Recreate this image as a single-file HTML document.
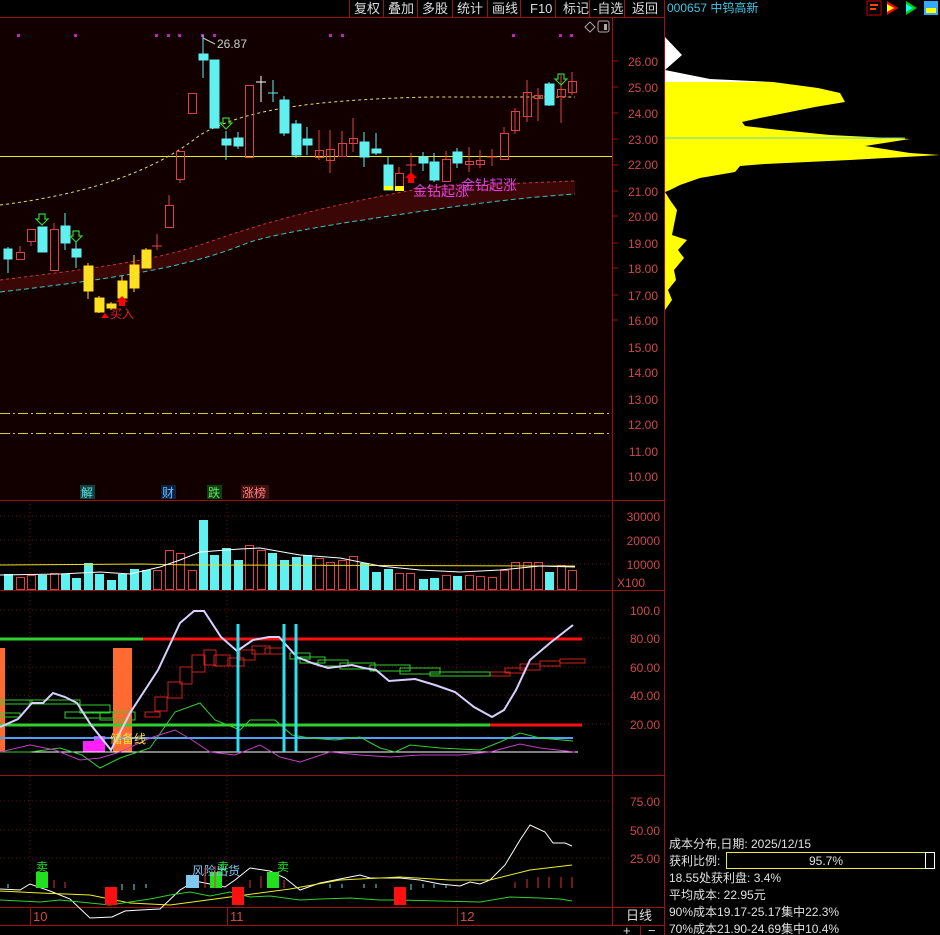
<!DOCTYPE html>
<html><head><meta charset="utf-8"><style>
html,body{margin:0;padding:0;background:#000;width:940px;height:935px;overflow:hidden}
svg{display:block}
text{font-family:"Liberation Sans","Noto Sans CJK SC",sans-serif}
</style></head><body>
<svg width="940" height="935" viewBox="0 0 940 935" xmlns="http://www.w3.org/2000/svg">
<rect width="940" height="935" fill="#000"/>
<!-- main chart bg -->
<rect x="0" y="18" width="612" height="482" fill="#120000"/>
<!-- top bar -->
<g stroke="#a01010" stroke-width="1">
<line x1="0" y1="17.5" x2="665" y2="17.5"/>
<line x1="349.5" y1="0" x2="349.5" y2="17"/><line x1="383.5" y1="0" x2="383.5" y2="17"/><line x1="417.5" y1="0" x2="417.5" y2="17"/><line x1="452.5" y1="0" x2="452.5" y2="17"/><line x1="487.5" y1="0" x2="487.5" y2="17"/><line x1="520.5" y1="0" x2="520.5" y2="17"/><line x1="555.5" y1="0" x2="555.5" y2="17"/><line x1="589.5" y1="0" x2="589.5" y2="17"/><line x1="624.5" y1="0" x2="624.5" y2="17"/>
<line x1="664.5" y1="0" x2="664.5" y2="935"/>
<line x1="612.5" y1="18" x2="612.5" y2="925"/>
<line x1="0" y1="500.5" x2="665" y2="500.5"/>
<line x1="0" y1="590.5" x2="665" y2="590.5"/>
<line x1="0" y1="775.5" x2="665" y2="775.5"/>
<line x1="0" y1="907.5" x2="665" y2="907.5"/>
<line x1="0" y1="925.5" x2="665" y2="925.5"/>
<line x1="30.5" y1="907" x2="30.5" y2="925"/><line x1="227.5" y1="907" x2="227.5" y2="925"/><line x1="457.5" y1="907" x2="457.5" y2="925"/>
<line x1="640.5" y1="925" x2="640.5" y2="935"/>
</g>
<g fill="#ddd" font-size="13">
<text x="354" y="13">复权</text><text x="388" y="13">叠加</text><text x="422" y="13">多股</text><text x="457" y="13">统计</text><text x="492" y="13">画线</text><text x="530" y="13">F10</text><text x="563" y="13">标记</text><text x="593" y="13">-自选</text><text x="632" y="13">返回</text>
</g>
<text x="667" y="12" fill="#3cc8e8" font-size="12">000657 中钨高新</text>
<!-- top right icons -->
<rect x="867" y="1" width="14" height="14" fill="none" stroke="#c00"/><line x1="870" y1="5" x2="878" y2="5" stroke="#f40" stroke-width="2"/><line x1="870" y1="9" x2="876" y2="9" stroke="#f40" stroke-width="2"/>
<polygon points="887,1 898,8 887,15" fill="#f00"/><polygon points="887,4 894,8 887,12" fill="#ff0"/>
<polygon points="906,1 917,8 906,15" fill="#0c0"/><polygon points="906,4 913,8 906,12" fill="#0ff"/>
<rect x="924" y="1" width="14" height="14" fill="#3af"/><rect x="926" y="8" width="10" height="5" fill="#ff0"/>
<!-- diamond & icon -->
<polygon points="590,22 595,27 590,32 585,27" fill="none" stroke="#aaa"/>
<rect x="598" y="21" width="11" height="11" rx="2" fill="none" stroke="#aaa"/><rect x="604" y="24" width="3" height="6" fill="#aaa"/>
<!-- magenta dots -->
<g fill="#c020c0"><rect x="17" y="34" width="3" height="3"/><rect x="74" y="34" width="3" height="3"/><rect x="155" y="34" width="3" height="3"/><rect x="167" y="34" width="3" height="3"/><rect x="178" y="34" width="3" height="3"/><rect x="201" y="34" width="3" height="3"/><rect x="213" y="34" width="3" height="3"/><rect x="329" y="34" width="3" height="3"/><rect x="341" y="34" width="3" height="3"/><rect x="512" y="34" width="3" height="3"/><rect x="559" y="34" width="3" height="3"/><rect x="570" y="34" width="3" height="3"/></g>
<!-- band -->
<path d="M0,280 C80,270 150,262 200,245 C250,228 300,210 430,187 L575,181 L575,194 C520,198 480,202 350,222 C300,230 270,236 250,242 C200,262 150,275 0,292 Z" fill="#3a0606"/>
<path d="M0,280 C80,270 150,262 200,245 C250,228 300,210 430,187 L575,181" fill="none" stroke="#d03030" stroke-dasharray="3,3"/>
<path d="M0,292 C150,275 200,262 250,242 C270,236 300,230 350,222 C480,202 520,198 575,194" fill="none" stroke="#40c0c0" stroke-dasharray="5,3"/>
<path d="M0,205 C80,195 150,175 200,135 C240,112 300,100 430,97 L575,97" fill="none" stroke="#e8e060" stroke-dasharray="3,3"/>
<line x1="0" y1="156.5" x2="612" y2="156.5" stroke="#e8e820"/>
<line x1="0" y1="413.5" x2="612" y2="413.5" stroke="#d8c830" stroke-dasharray="10,3,2,3"/>
<line x1="0" y1="433.5" x2="612" y2="433.5" stroke="#d8c830" stroke-dasharray="10,3,2,3"/>
<!-- candles -->
<g stroke-width="1">
<g stroke="#60f0f0" fill="#60f0f0">
<line x1="8" y1="247" x2="8" y2="273"/><rect x="4" y="249" width="8" height="10"/>
<line x1="42" y1="227" x2="42" y2="252"/><rect x="38" y="227" width="9" height="25"/>
<line x1="65" y1="213" x2="65" y2="250"/><rect x="61" y="226" width="9" height="17"/>
<line x1="76" y1="242" x2="76" y2="268"/><rect x="72" y="249" width="9" height="8"/>
<line x1="203" y1="35" x2="203" y2="78"/><rect x="199" y="54" width="9" height="6"/>
<rect x="210" y="60" width="9" height="68"/>
<line x1="226" y1="131" x2="226" y2="160"/><rect x="222" y="139" width="9" height="6"/>
<line x1="238" y1="132" x2="238" y2="149"/><rect x="234" y="138" width="9" height="8"/>
<line x1="273" y1="80" x2="273" y2="102"/><line x1="268" y1="93" x2="278" y2="93"/>
<line x1="284" y1="96" x2="284" y2="136"/><rect x="280" y="100" width="9" height="33"/>
<line x1="296" y1="120" x2="296" y2="158"/><rect x="292" y="124" width="9" height="31"/>
<line x1="307" y1="127" x2="307" y2="155"/><rect x="303" y="139" width="9" height="6"/>
<line x1="364" y1="132" x2="364" y2="167"/><rect x="360" y="142" width="9" height="15"/>
<line x1="376" y1="133" x2="376" y2="155"/><rect x="372" y="149" width="9" height="4"/>
<line x1="388" y1="156" x2="388" y2="190"/><rect x="384" y="165" width="9" height="25"/>
<line x1="423" y1="152" x2="423" y2="171"/><rect x="419" y="157" width="9" height="6"/>
<line x1="434" y1="153" x2="434" y2="182"/><rect x="430" y="162" width="9" height="18"/>
<line x1="457" y1="148" x2="457" y2="168"/><rect x="453" y="152" width="9" height="11"/>
<line x1="549" y1="82" x2="549" y2="106"/><rect x="545" y="84" width="9" height="21"/>
</g>
<rect x="384" y="186" width="9" height="4" fill="#ff0"/>
<g stroke="#ffe020" fill="#ffe020">
<line x1="88" y1="263" x2="88" y2="299"/><rect x="84" y="266" width="9" height="25"/>
<line x1="99" y1="296" x2="99" y2="313"/><rect x="95" y="298" width="9" height="14"/>
<line x1="111" y1="302" x2="111" y2="310"/><rect x="107" y="304" width="9" height="4"/>
<line x1="122" y1="276" x2="122" y2="300"/><rect x="118" y="281" width="9" height="17"/>
<line x1="134" y1="255" x2="134" y2="292"/><rect x="130" y="265" width="9" height="23"/>
<line x1="146" y1="248" x2="146" y2="268"/><rect x="142" y="250" width="9" height="18"/>
</g>
<g stroke="#e04040" fill="none">
<rect x="16.5" y="252.5" width="8" height="7"/><line x1="20" y1="246" x2="20" y2="252"/>
<rect x="27.5" y="229.5" width="8" height="12"/><line x1="31" y1="241" x2="31" y2="246"/>
<rect x="50.5" y="229.5" width="8" height="41"/><line x1="54" y1="223" x2="54" y2="229"/>
<line x1="157" y1="234" x2="157" y2="250"/><line x1="152" y1="246" x2="162" y2="246"/>
<rect x="165.5" y="205.5" width="8" height="22"/><line x1="169" y1="195" x2="169" y2="205"/>
<rect x="176.5" y="151.5" width="8" height="28"/><line x1="180" y1="180" x2="180" y2="183"/>
<rect x="188.5" y="93.5" width="8" height="20"/>
<rect x="245.5" y="85.5" width="8" height="72"/>
<rect x="315.5" y="150.5" width="8" height="7"/><line x1="319" y1="130" x2="319" y2="160"/>
<rect x="326.5" y="149.5" width="8" height="11"/><line x1="330" y1="130" x2="330" y2="173"/>
<rect x="338.5" y="143.5" width="8" height="13"/><line x1="342" y1="131" x2="342" y2="157"/>
<rect x="349.5" y="138.5" width="8" height="5"/><line x1="353" y1="118" x2="353" y2="152"/>
<rect x="395.5" y="173.5" width="8" height="17"/><line x1="399" y1="167" x2="399" y2="173"/>
<line x1="411" y1="153" x2="411" y2="173"/><line x1="406" y1="165" x2="416" y2="165"/>
<rect x="442.5" y="159.5" width="8" height="22"/><line x1="446" y1="151" x2="446" y2="159"/>
<rect x="465.5" y="161.5" width="8" height="3"/><line x1="469" y1="147" x2="469" y2="172"/>
<rect x="476.5" y="160.5" width="8" height="4"/><line x1="480" y1="150" x2="480" y2="168"/>
<line x1="492" y1="149" x2="492" y2="166"/><line x1="487" y1="157" x2="497" y2="157"/>
<rect x="500.5" y="133.5" width="8" height="26"/><line x1="504" y1="127" x2="504" y2="133"/>
<rect x="511.5" y="111.5" width="8" height="19"/><line x1="515" y1="108" x2="515" y2="134"/>
<rect x="523.5" y="92.5" width="8" height="24"/><line x1="527" y1="80" x2="527" y2="122"/>
<rect x="534.5" y="95.5" width="8" height="3"/><line x1="538" y1="88" x2="538" y2="121"/>
<rect x="557.5" y="89.5" width="8" height="7"/><line x1="561" y1="75" x2="561" y2="123"/>
<rect x="568.5" y="81.5" width="8" height="11"/><line x1="572" y1="72" x2="572" y2="95"/>
</g>
<g stroke="#fff"><line x1="261" y1="76" x2="261" y2="102"/><line x1="256" y1="82" x2="266" y2="82"/></g>
<rect x="395" y="186" width="9" height="5" fill="#ff0"/>
</g>
<!-- arrows -->
<g fill="none" stroke="#30d030" stroke-width="1.2">
<path d="M39,214h6v5h3l-6,6l-6,-6h3z"/><path d="M73,231h6v5h3l-6,6l-6,-6h3z"/><path d="M223,118h6v5h3l-6,6l-6,-6h3z"/><path d="M558,74h6v5h3l-6,6l-6,-6h3z"/>
</g>
<path d="M408,183v-5h-3l6,-6l6,6h-3v5z" fill="#f00"/>
<path d="M119,306v-4h-3l6,-6l6,6h-3v4z" fill="#f00"/>
<polygon points="105,313 101,318 109,318" fill="#f00"/>
<text x="110" y="318" fill="#e02020" font-size="12">买入</text>
<text x="413" y="196" fill="#e040e0" font-size="14">金钻起涨</text>
<text x="461" y="190" fill="#e040e0" font-size="14">金钻起涨</text>
<line x1="203" y1="38" x2="215" y2="44" stroke="#ccc"/>
<text x="217" y="48" fill="#ccc" font-size="12">26.87</text>
<!-- right axis labels -->
<g fill="#d04848" font-size="12" text-anchor="end">
<text x="658" y="66">26.00</text><text x="658" y="92">25.00</text><text x="658" y="118">24.00</text><text x="658" y="144">23.00</text><text x="658" y="169">22.00</text><text x="658" y="196">21.00</text><text x="658" y="221">20.00</text><text x="658" y="248">19.00</text><text x="658" y="273">18.00</text><text x="658" y="300">17.00</text><text x="658" y="325">16.00</text><text x="658" y="352">15.00</text><text x="658" y="377">14.00</text><text x="658" y="404">13.00</text><text x="658" y="429">12.00</text><text x="658" y="456">11.00</text><text x="658" y="481">10.00</text>
<text x="660" y="521">30000</text><text x="660" y="545">20000</text><text x="660" y="569">10000</text>
<text x="660" y="615">100.0</text><text x="660" y="643">80.00</text><text x="660" y="672">60.00</text><text x="660" y="700">40.00</text><text x="660" y="729">20.00</text>
<text x="660" y="806">75.00</text><text x="660" y="835">50.00</text><text x="660" y="863">25.00</text>
</g>
<text x="617" y="587" fill="#d04848" font-size="12">X100</text>
<g stroke="#a01010"><line x1="613" y1="61" x2="618" y2="61"/><line x1="613" y1="87" x2="618" y2="87"/><line x1="613" y1="113" x2="618" y2="113"/><line x1="613" y1="139" x2="618" y2="139"/><line x1="613" y1="165" x2="618" y2="165"/><line x1="613" y1="191" x2="618" y2="191"/><line x1="613" y1="216" x2="618" y2="216"/><line x1="613" y1="243" x2="618" y2="243"/><line x1="613" y1="268" x2="618" y2="268"/><line x1="613" y1="295" x2="618" y2="295"/><line x1="613" y1="320" x2="618" y2="320"/></g>
<!-- chip distribution -->
<polygon points="665,37 682,55 665,70 680,73 710,79 773,82 665,82" fill="#fff"/>
<polygon points="665,82 773,82 818,88 840,93 845,102 815,107 790,112 760,118 742,122 745,126 780,130 830,135 870,137 910,139 865,146 910,153 940,155 850,160 765,164 740,166 735,172 700,178 680,185 670,190 665,192 670,200 677,210 672,235 687,240 678,250 684,258 674,270 676,280 668,290 672,300 665,310" fill="#ffff00"/>
<line x1="665" y1="138" x2="905" y2="138" stroke="#60d0c0"/>
<!-- markers row -->
<g font-size="12"><rect x="80" y="485" width="15" height="14" fill="#104040"/><text x="81" y="497" fill="#60e0e0">解</text>
<rect x="161" y="485" width="15" height="14" fill="#102040"/><text x="162" y="497" fill="#60c0ff">财</text>
<rect x="207" y="485" width="15" height="14" fill="#104010"/><text x="208" y="497" fill="#60e060">跌</text>
<rect x="241" y="485" width="28" height="14" fill="#401010"/><text x="242" y="497" fill="#ff8080">涨榜</text></g>
<!-- volume grid -->
<g stroke="#701010" stroke-dasharray="1,3"><line x1="0" y1="516" x2="612" y2="516"/><line x1="0" y1="540" x2="612" y2="540"/><line x1="0" y1="564" x2="612" y2="564"/><line x1="30" y1="500" x2="30" y2="907"/><line x1="227" y1="500" x2="227" y2="907"/><line x1="457" y1="500" x2="457" y2="907"/>
<line x1="0" y1="610" x2="612" y2="610"/><line x1="0" y1="638" x2="612" y2="638"/><line x1="0" y1="667" x2="612" y2="667"/><line x1="0" y1="695" x2="612" y2="695"/><line x1="0" y1="724" x2="612" y2="724"/>
<line x1="0" y1="801" x2="612" y2="801"/><line x1="0" y1="830" x2="612" y2="830"/><line x1="0" y1="858" x2="612" y2="858"/></g>
<!-- volume bars -->
<g fill="#60f0f0">
<rect x="4" y="574" width="9" height="16"/><rect x="38" y="575" width="9" height="15"/><rect x="61" y="574" width="9" height="16"/><rect x="72" y="578" width="9" height="12"/><rect x="84" y="563" width="9" height="27"/><rect x="95" y="574" width="9" height="16"/><rect x="107" y="580" width="9" height="10"/><rect x="118" y="574" width="9" height="16"/><rect x="130" y="569" width="9" height="21"/><rect x="142" y="570" width="9" height="20"/>
<rect x="199" y="520" width="9" height="70"/><rect x="210" y="555" width="9" height="35"/><rect x="222" y="548" width="9" height="42"/><rect x="234" y="560" width="9" height="30"/>
<rect x="268" y="553" width="9" height="37"/><rect x="280" y="560" width="9" height="30"/><rect x="292" y="557" width="9" height="33"/><rect x="303" y="555" width="9" height="35"/>
<rect x="360" y="563" width="9" height="27"/><rect x="372" y="572" width="9" height="18"/><rect x="384" y="569" width="9" height="21"/><rect x="419" y="579" width="9" height="11"/><rect x="430" y="578" width="9" height="12"/><rect x="453" y="576" width="9" height="14"/><rect x="545" y="572" width="9" height="18"/>
</g>
<g fill="none" stroke="#e04040">
<rect x="16.5" y="577.5" width="8" height="12"/><rect x="27.5" y="575.5" width="8" height="14"/><rect x="50.5" y="573.5" width="8" height="16"/><rect x="153.5" y="570.5" width="8" height="19"/><rect x="165.5" y="550.5" width="8" height="39"/><rect x="176.5" y="553.5" width="8" height="36"/><rect x="188.5" y="570.5" width="8" height="19"/><rect x="245.5" y="545.5" width="8" height="44"/><rect x="257.5" y="550.5" width="8" height="39"/>
<rect x="315.5" y="558.5" width="8" height="31"/><rect x="326.5" y="562.5" width="8" height="27"/><rect x="338.5" y="560.5" width="8" height="29"/><rect x="349.5" y="556.5" width="8" height="33"/><rect x="395.5" y="573.5" width="8" height="16"/><rect x="406.5" y="573.5" width="8" height="16"/><rect x="442.5" y="575.5" width="8" height="14"/><rect x="465.5" y="575.5" width="8" height="14"/><rect x="476.5" y="576.5" width="8" height="13"/><rect x="488.5" y="577.5" width="8" height="12"/><rect x="500.5" y="570.5" width="8" height="19"/><rect x="511.5" y="562.5" width="8" height="27"/><rect x="523.5" y="562.5" width="8" height="27"/><rect x="534.5" y="562.5" width="8" height="27"/><rect x="557.5" y="565.5" width="8" height="24"/><rect x="568.5" y="570.5" width="8" height="19"/>
</g>
<polyline points="0,565 140,564 190,565 575,566" fill="none" stroke="#e8e020"/>
<polyline points="0,575 60,574 100,572 130,574 160,567 180,560 200,552 240,549 260,548 300,555 340,558 380,566 420,570 460,572 500,570 540,566 575,567" fill="none" stroke="#fff"/>
<!-- indicator panel -->
<rect x="0" y="648" width="5" height="104" fill="#ff6a30"/>
<rect x="113" y="648" width="19" height="104" fill="#ff6a30"/>
<rect x="83" y="741" width="22" height="11" fill="#ff20ff"/><rect x="94" y="736" width="11" height="6" fill="#ff20ff"/>
<g fill="none" stroke="#d02020">
<rect x="145" y="712" width="15" height="5"/><rect x="155" y="697" width="12" height="14"/><rect x="168" y="682" width="14" height="16"/><rect x="180" y="667" width="12" height="17"/><rect x="192" y="655" width="13" height="17"/><rect x="204" y="650" width="12" height="15"/><rect x="214" y="655" width="16" height="11"/><rect x="228" y="658" width="16" height="8"/><rect x="240" y="650" width="15" height="10"/><rect x="252" y="646" width="18" height="8"/><rect x="265" y="648" width="20" height="6"/>
<rect x="490" y="672" width="20" height="4"/><rect x="505" y="668" width="20" height="5"/><rect x="520" y="664" width="20" height="6"/><rect x="540" y="661" width="20" height="5"/><rect x="560" y="659" width="25" height="4"/>
</g>
<g fill="none" stroke="#30d030">
<rect x="290" y="653" width="20" height="6"/><rect x="300" y="657" width="25" height="6"/><rect x="318" y="660" width="30" height="6"/><rect x="340" y="663" width="35" height="6"/><rect x="370" y="665" width="40" height="6"/><rect x="400" y="668" width="40" height="6"/><rect x="430" y="672" width="60" height="4"/>
<rect x="0" y="700" width="32" height="4"/><rect x="0" y="713" width="20" height="4"/><rect x="30" y="700" width="50" height="4"/><rect x="65" y="712" width="48" height="6"/><rect x="80" y="705" width="30" height="8"/><rect x="100" y="712" width="35" height="8"/>
</g>
<line x1="0" y1="639" x2="143" y2="639" stroke="#30d030" stroke-width="3"/><line x1="143" y1="639" x2="582" y2="639" stroke="#ff1010" stroke-width="3"/>
<line x1="0" y1="725" x2="490" y2="725" stroke="#30d030" stroke-width="3"/><line x1="490" y1="725" x2="582" y2="725" stroke="#ff1010" stroke-width="3"/>
<line x1="0" y1="738" x2="573" y2="738" stroke="#50a0ff" stroke-width="2"/>
<line x1="0" y1="752" x2="578" y2="752" stroke="#fff"/>
<polyline points="0,752 30,752 60,748 82,755 100,768 120,758 150,748 175,712 200,703 215,720 240,730 250,720 275,720 292,735 310,738 335,740 360,737 380,748 395,752 410,745 440,748 480,750 500,742 520,733 540,738 573,741" fill="none" stroke="#30d030"/>
<polyline points="0,752 30,745 55,750 80,760 100,758 120,752 150,738 175,730 192,740 210,752 235,755 260,745 280,757 300,762 330,752 360,755 390,757 420,755 460,755 490,752 520,744 540,748 575,752" fill="none" stroke="#c040c0"/>
<polyline points="0,727 18,719 32,703 43,703 53,693 65,697 77,703 91,725 111,750 130,713 158,670 180,623 194,611 204,611 221,637 237,651 253,640 269,637 279,637 297,657 312,663 328,668 352,665 364,668 376,670 389,681 415,679 435,685 455,692 474,707 492,717 504,710 516,690 530,660 550,643 573,625" fill="none" stroke="#d8d0ff" stroke-width="2"/>
<g stroke="#30e0f0" stroke-width="3"><line x1="238" y1="624" x2="238" y2="752"/><line x1="284" y1="624" x2="284" y2="752"/><line x1="296" y1="624" x2="296" y2="752"/></g>
<text x="110" y="743" fill="#ffe040" font-size="12">储备线</text>
<!-- bottom panel -->
<polyline points="0,889 20,890 30,884 50,891 70,899 90,918 112,917 125,911 140,910 160,909 180,890 195,881 210,884 225,887 235,880 250,868 270,871 285,878 300,890 320,883 335,880 350,877 360,875 370,878 380,878 400,878 420,880 440,884 460,886 470,882 480,884 490,880 505,865 520,840 530,825 545,832 553,843 565,843 572,846" fill="none" stroke="#fff"/>
<polyline points="0,891 40,893 90,895 130,903 170,905 230,897 290,889 340,880 400,877 450,880 490,880 530,870 572,865" fill="none" stroke="#f0f020"/>
<polyline points="0,900 40,902 60,900 80,902 110,905 130,902 150,899 170,895 190,892 210,896 230,892 250,897 270,896 300,900 320,899 350,898 380,900 400,900 480,902 510,897 540,898 560,899 572,901" fill="none" stroke="#30d030"/>
<rect x="36" y="872" width="12" height="16" fill="#20e020"/><text x="42" y="871" fill="#20e020" font-size="12" text-anchor="middle">卖</text>
<rect x="210" y="872" width="12" height="16" fill="#20e020"/><text x="223" y="871" fill="#20e020" font-size="12" text-anchor="middle">卖</text>
<rect x="267" y="872" width="12" height="16" fill="#20e020"/><text x="283" y="871" fill="#20e020" font-size="12" text-anchor="middle">卖</text>
<rect x="186" y="875" width="13" height="13" fill="#80c8f0"/><text x="192" y="875" fill="#80c8f0" font-size="12">风险出货</text>
<rect x="105" y="887" width="12" height="18" fill="#ff1010"/><rect x="232" y="887" width="12" height="18" fill="#ff1010"/><rect x="394" y="887" width="12" height="18" fill="#ff1010"/>
<g stroke="#e03030"><line x1="54" y1="880" x2="54" y2="888"/><line x1="65" y1="882" x2="65" y2="888"/><line x1="205" y1="868" x2="205" y2="888"/><line x1="215" y1="866" x2="215" y2="888"/><line x1="250" y1="880" x2="250" y2="888"/><line x1="261" y1="876" x2="261" y2="888"/><line x1="284" y1="880" x2="284" y2="888"/><line x1="515" y1="882" x2="515" y2="888"/><line x1="527" y1="879" x2="527" y2="888"/><line x1="538" y1="877" x2="538" y2="888"/><line x1="549" y1="877" x2="549" y2="888"/><line x1="561" y1="877" x2="561" y2="888"/><line x1="572" y1="877" x2="572" y2="888"/></g>
<g stroke="#60e0e0"><line x1="8" y1="884" x2="8" y2="888"/><line x1="122" y1="884" x2="122" y2="890"/><line x1="134" y1="884" x2="134" y2="890"/><line x1="146" y1="884" x2="146" y2="888"/><line x1="330" y1="884" x2="330" y2="888"/><line x1="342" y1="884" x2="342" y2="888"/><line x1="364" y1="884" x2="364" y2="888"/><line x1="376" y1="884" x2="376" y2="888"/><line x1="411" y1="884" x2="411" y2="890"/><line x1="423" y1="884" x2="423" y2="888"/><line x1="434" y1="884" x2="434" y2="888"/><line x1="446" y1="884" x2="446" y2="888"/></g>
<!-- date axis -->
<g fill="#d04848" font-size="13"><text x="33" y="921">10</text><text x="230" y="921">11</text><text x="460" y="921">12</text></g>
<text x="626" y="920" fill="#ddd" font-size="13">日线</text>
<text x="623" y="935" fill="#ddd" font-size="13">+</text><text x="648" y="935" fill="#ddd" font-size="13">−</text>
<!-- chip info -->
<g fill="#e0e0e0" font-size="12">
<text x="669" y="848">成本分布,日期: 2025/12/15</text>
<text x="669" y="865">获利比例:</text>
<text x="669" y="882">18.55处获利盘: 3.4%</text>
<text x="669" y="899">平均成本: 22.95元</text>
<text x="669" y="916">90%成本19.17-25.17集中22.3%</text>
<text x="669" y="933">70%成本21.90-24.69集中10.4%</text>
</g>
<rect x="726.5" y="852.5" width="199" height="16" fill="none" stroke="#e8e840"/>
<rect x="925.5" y="852.5" width="9" height="16" fill="none" stroke="#fff"/>
<text x="826" y="865" fill="#e0e0e0" font-size="12" text-anchor="middle">95.7%</text>
</svg>
</body></html>
